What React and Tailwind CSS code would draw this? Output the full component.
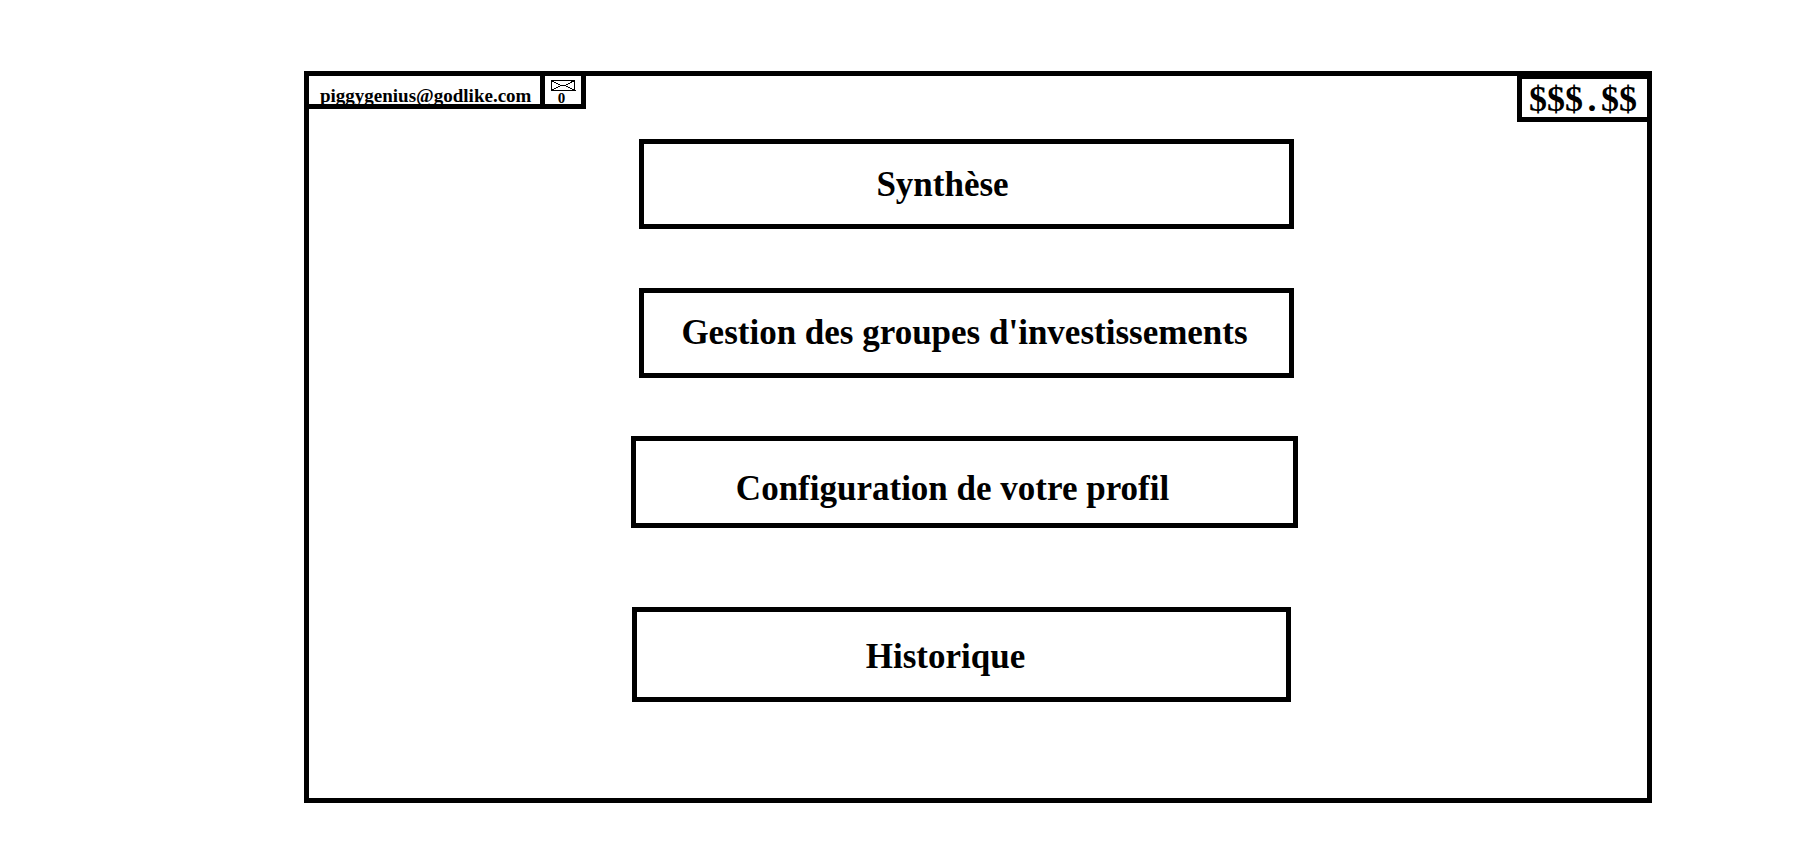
const entries = [
  { label: "Synthèse", box: "ml-2 mr-1", pad: "pt-[21px] pb-[19px] pr-12" },
  { label: "Gestion des groupes d'investissements", box: "mt-[59px] ml-2 mr-1", pad: "py-5 pr-1" },
  { label: "Configuration de votre profil", box: "mt-[58px]", pad: "pt-7 pb-[14px] pr-6" },
  { label: "Historique", box: "mt-[79px] ml-px mr-[7px]", pad: "pt-[25px] pb-5 pr-8" },
];

function Envelope() {
  return (
    <svg width="25" height="12" viewBox="0 0 25 12" fill="none" stroke="black" shapeRendering="crispEdges" aria-hidden="true">
      <path d="M0.5 0.5H23.5V10.5H0.5Z" />
      <path d="M0.5 0.5L10 5.5H14L23.5 0.5M0.5 10.5L10 5.5M14 5.5L23.5 10.5" />
      <path d="M23 10.5H25" />
    </svg>
  );
}

export default function App() {
  return (
    <div className="min-h-screen bg-white pt-[71px] pr-[161px] pb-11 pl-[304px] font-['Liberation_Serif',serif] font-bold text-black">
      <main className="border-5 border-black">
        <header className="flex items-start justify-between">
          <div className="flex">
            <a href="#profil" className="block h-[33px] overflow-hidden border-r-5 border-b-5 border-black pt-[6px] pr-[9px] pl-[11px] text-[19px] leading-7">
              piggygenius@godlike.com
            </a>
            <button type="button" aria-label="Messages : 0" className="flex h-[33px] w-[41px] flex-col items-center border-r-5 border-b-5 border-black pt-1 text-[15px]">
              <Envelope />
              <span className="pr-1 leading-3">0</span>
            </button>
          </div>
          <div className="flex border-t-3 border-b-5 border-l-5 border-black pt-[2px] pr-[10px] pl-[7px] text-[36px] leading-9">
            <span>$$$</span>
            <span className="w-[18px] text-center">.</span>
            <span>$$</span>
          </div>
        </header>
        <nav className="flex flex-col pt-[17px] pr-[349px] pb-24 pl-[322px]">
          {entries.map((e) => (
            <button key={e.label} type="button" className={`border-5 border-black text-center text-[35px] leading-10 whitespace-nowrap ${e.box} ${e.pad}`}>
              {e.label}
            </button>
          ))}
        </nav>
      </main>
    </div>
  );
}
